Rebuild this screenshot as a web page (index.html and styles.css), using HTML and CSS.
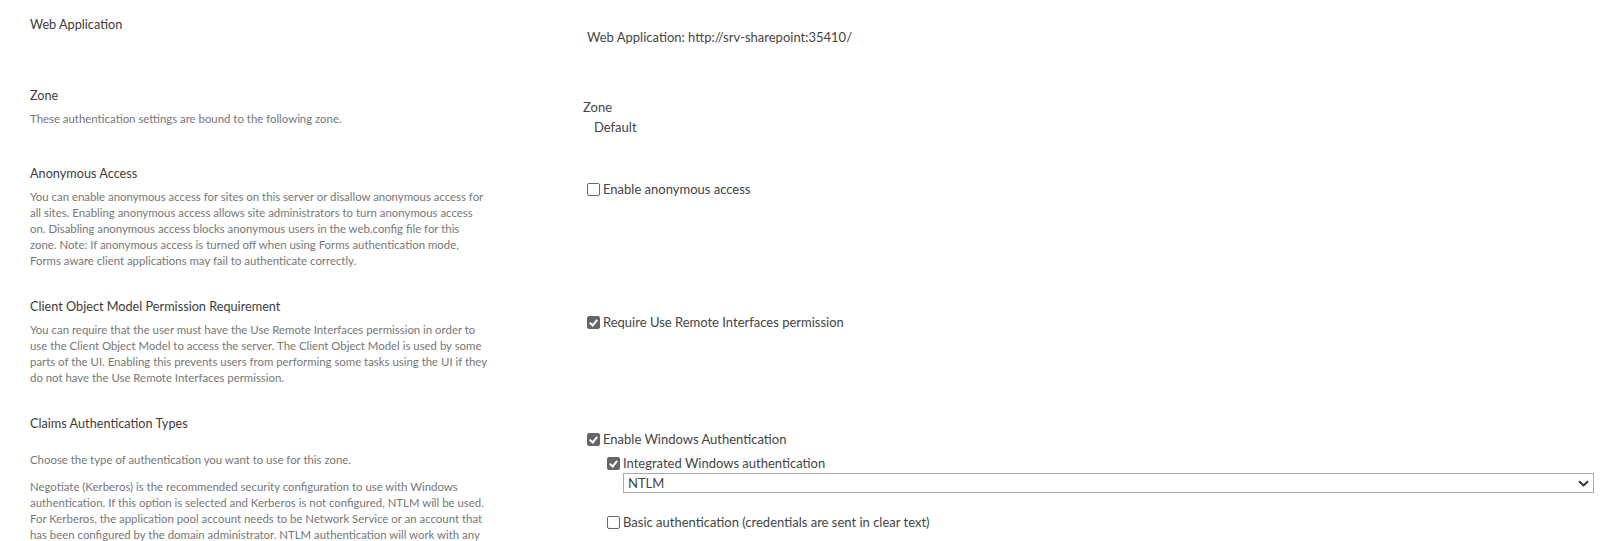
FILE: index.html
```html
<!DOCTYPE html>
<html lang="en">
<head>
    <meta charset="UTF-8">
    <title>Authentication Providers - Edit Authentication</title>
    <link rel="stylesheet" href="styles.css">
</head>
<body>

    <div class="auth-form">

        <!-- Web Application -->
        <div class="section section-webapp">
            <div class="section-info">
                <h3 class="section-title">Web Application</h3>
            </div>
            <div class="section-controls">
                <div class="webapp-url">Web Application: http://srv-sharepoint:35410/</div>
            </div>
        </div>

        <!-- Zone -->
        <div class="section section-zone">
            <div class="section-info">
                <h3 class="section-title">Zone</h3>
                <p class="section-desc">These authentication settings are bound to the following zone.</p>
            </div>
            <div class="section-controls">
                <div class="zone-label">Zone</div>
                <div class="zone-value">Default</div>
            </div>
        </div>

        <!-- Anonymous Access -->
        <div class="section">
            <div class="section-info">
                <h3 class="section-title">Anonymous Access</h3>
                <p class="section-desc">You can enable anonymous access for sites on this server or disallow anonymous access for all sites. Enabling anonymous access allows site administrators to turn anonymous access on. Disabling anonymous access blocks anonymous users in the web.config file for this zone. Note: If anonymous access is turned off when using Forms authentication mode, Forms aware client applications may fail to authenticate correctly.</p>
            </div>
            <div class="section-controls">
                <label class="check-row">
                    <input type="checkbox" class="check">
                    <span>Enable anonymous access</span>
                </label>
            </div>
        </div>

        <!-- Client Object Model -->
        <div class="section">
            <div class="section-info">
                <h3 class="section-title">Client Object Model Permission Requirement</h3>
                <p class="section-desc">You can require that the user must have the Use Remote Interfaces permission in order to use the Client Object Model to access the server. The Client Object Model is used by some parts of the UI. Enabling this prevents users from performing some tasks using the UI if they do not have the Use Remote Interfaces permission.</p>
            </div>
            <div class="section-controls">
                <label class="check-row">
                    <input type="checkbox" class="check" checked>
                    <span>Require Use Remote Interfaces permission</span>
                </label>
            </div>
        </div>

        <!-- Claims Authentication Types -->
        <div class="section">
            <div class="section-info">
                <h3 class="section-title">Claims Authentication Types</h3>
                <p class="section-desc desc-first">Choose the type of authentication you want to use for this zone.</p>
                <p class="section-desc desc-para">Negotiate (Kerberos) is the recommended security configuration to use with Windows authentication. If this option is selected and Kerberos is not configured, NTLM will be used. For Kerberos, the application pool account needs to be Network Service or an account that has been configured by the domain administrator. NTLM authentication will work with any application pool account and with the default domain configuration.</p>
            </div>
            <div class="section-controls">
                <label class="check-row">
                    <input type="checkbox" class="check" checked>
                    <span>Enable Windows Authentication</span>
                </label>
                <div class="nested">
                    <label class="check-row">
                        <input type="checkbox" class="check" checked>
                        <span>Integrated Windows authentication</span>
                    </label>
                    <div class="select-wrap">
                        <select class="auth-select">
                            <option>NTLM</option>
                            <option>Negotiate (Kerberos)</option>
                        </select>
                        <svg class="select-arrow" width="11" height="7" viewBox="0 0 11 7">
                            <path d="M1 1.2 L5.5 5.4 L10 1.2" fill="none" stroke="#333" stroke-width="2"/>
                        </svg>
                    </div>
                    <label class="check-row check-basic">
                        <input type="checkbox" class="check">
                        <span>Basic authentication (credentials are sent in clear text)</span>
                    </label>
                </div>
            </div>
        </div>

    </div>

</body>
</html>
```

FILE: styles.css
```css
html, body {
    margin: 0;
    background-color: #ffffff;
    font-family: Lato, "Open Sans", Arial, sans-serif;
    color: #444444;
    overflow: hidden;
}

.auth-form {
    padding-top: 15px;
}

/* Each setting is one row: description on the left, controls on the right */
.section {
    display: flex;
    padding-bottom: 28px;
}

.section-info {
    width: 458px;
    flex: none;
    padding: 0 65px 0 30px;
}

.section-controls {
    flex: 1;
    padding: 15px 19px 0 30px;
    font-size: 13px;
    line-height: 18px;
}

.section-title {
    margin: 0;
    font-size: 12.7px;
    line-height: 18px;
    font-weight: normal;
    color: #3c3c3c;
}

.section-desc {
    margin: 7px 0 0;
    font-size: 11.4px;
    line-height: 16px;
    color: #777777;
}

.desc-first {
    margin-top: 20px;
}

.desc-para {
    margin-top: 11px;
}

/* Web Application + Zone rows have fixed heights */
.section-webapp {
    min-height: 71px;
    padding-bottom: 0;
}

.section-webapp .section-controls {
    padding-top: 13px;
}

.webapp-url {
    padding-left: 4px;
}

.section-zone {
    min-height: 78px;
    padding-bottom: 0;
}

.section-zone .section-controls {
    padding-top: 12px;
}

.zone-value {
    margin-top: 2px;
    padding-left: 11px;
}

/* Checkboxes */
.check-row {
    display: flex;
    align-items: center;
    height: 20px;
}

.check {
    appearance: none;
    -webkit-appearance: none;
    position: relative;
    width: 13px;
    height: 13px;
    margin: 0 3px 0 4px;
    border: 1px solid #666666;
    border-radius: 2px;
    background-color: #ffffff;
    box-sizing: border-box;
}

.check:checked {
    background-color: #666666;
    border-color: #666666;
}

.check:checked::after {
    content: "";
    position: absolute;
    left: 3px;
    top: 1px;
    width: 3px;
    height: 6px;
    border: solid #ffffff;
    border-width: 0 2px 2px 0;
    transform: rotate(40deg);
}

.nested {
    margin-top: 4px;
    padding-left: 20px;
}

.select-wrap {
    position: relative;
    margin-left: 20px;
}

.auth-select {
    appearance: none;
    -webkit-appearance: none;
    display: block;
    width: 100%;
    height: 20px;
    margin: 0;
    padding: 0 4px;
    border: 1px solid #ababab;
    border-radius: 0;
    background-color: #ffffff;
    font-family: inherit;
    font-size: 13px;
    color: #444444;
}

.select-arrow {
    position: absolute;
    right: 5px;
    top: 7px;
    pointer-events: none;
}

.check-basic {
    margin-top: 19px;
}
```
